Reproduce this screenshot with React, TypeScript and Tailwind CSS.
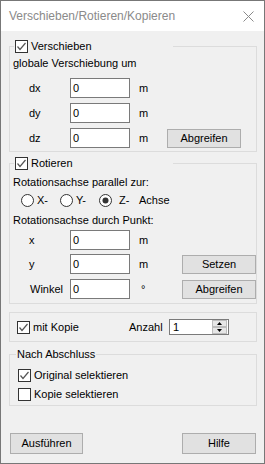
import { ReactNode } from 'react';

const font = { fontFamily: '"Liberation Sans", Arial, sans-serif' };

function CheckBox({ checked }: { checked: boolean }) {
  return (
    <svg width="13" height="13" viewBox="0 0 13 13" className="shrink-0">
      <rect x="0.5" y="0.5" width="12" height="12" fill="#fff" stroke="#333" />
      {checked && <path d="M2.5 6.5 L5 9.5 L10.5 3" fill="none" stroke="#555" strokeWidth="1.2" />}
    </svg>
  );
}

function Radio({ checked }: { checked: boolean }) {
  return (
    <svg width="13" height="13" viewBox="0 0 13 13" className="shrink-0">
      <circle cx="6.5" cy="6.5" r="6" fill="#fff" stroke="#333" />
      {checked && <circle cx="6.5" cy="6.5" r="3" fill="#333" />}
    </svg>
  );
}

function Button({ label, width, height = 'h-[19px]' }: { label: string; width: string; height?: string }) {
  return (
    <div
      className={`${width} ${height} shrink-0 flex items-center justify-center bg-[#e1e1e1] border border-[#adadad] text-black`}
    >
      {label}
    </div>
  );
}

function Field({ value = '0' }: { value?: string }) {
  return (
    <div className="w-[60px] h-[20px] shrink-0 flex items-center bg-white border border-[#7a7a7a] pl-[2px]">
      {value}
    </div>
  );
}

function InputRow({
  label,
  unit,
  unitWidth,
  children,
  className = '',
}: {
  label: string;
  unit: string;
  unitWidth: string;
  children?: ReactNode;
  className?: string;
}) {
  return (
    <div className={`flex items-center h-[20px] pl-[19px] ${className}`}>
      <span className="w-[41px] shrink-0">{label}</span>
      <Field />
      <span className={`ml-[9px] ${unitWidth} shrink-0`}>{unit}</span>
      {children}
    </div>
  );
}

function CheckLegend({ label }: { label: string }) {
  return (
    <legend className="ml-[4px] w-[159px] pl-[1px]">
      <span className="flex items-center h-[13px] gap-[3px]">
        <CheckBox checked />
        <span>{label}</span>
      </span>
    </legend>
  );
}

export default function App() {
  return (
    <div
      className="w-[265px] h-[464px] flex flex-col border border-[#777] bg-[#f0f0f0] text-[11px] leading-[13px] text-black"
      style={font}
    >
      {/* Title bar */}
      <div className="h-[30px] shrink-0 bg-white flex items-center justify-between pl-[8px] pr-[10px]">
        <span className="text-[12px] text-[#8a8a8a]">Verschieben/Rotieren/Kopieren</span>
        <svg width="11" height="11" viewBox="0 0 11 11">
          <path d="M0.5 0.5 L10.5 10.5 M10.5 0.5 L0.5 10.5" stroke="#8a8a8a" strokeWidth="1" />
        </svg>
      </div>

      <div className="flex-1 flex flex-col pl-[8px]">
        {/* Verschieben */}
        <fieldset className="mt-[9px] w-[248px] border border-[#dcdcdc] pb-[3px]">
          <CheckLegend label="Verschieben" />
          <div className="mt-[4px] pl-[3px]">globale Verschiebung um</div>
          <InputRow label="dx" unit="m" unitWidth="w-[28px]" className="mt-[8px]" />
          <InputRow label="dy" unit="m" unitWidth="w-[28px]" className="mt-[5px]" />
          <InputRow label="dz" unit="m" unitWidth="w-[28px]" className="mt-[5px]">
            <Button label="Abgreifen" width="w-[74px]" />
          </InputRow>
        </fieldset>

        {/* Rotieren */}
        <fieldset className="mt-[5px] w-[248px] border border-[#dcdcdc] pb-[4px]">
          <CheckLegend label="Rotieren" />
          <div className="mt-[6px] pl-[3px]">Rotationsachse parallel zur:</div>
          <div className="mt-[5px] h-[13px] flex items-center pl-[11px]">
            <span className="w-[39px] flex items-center gap-[3px]">
              <Radio checked={false} />
              <span>X-</span>
            </span>
            <span className="w-[39px] flex items-center gap-[3px]">
              <Radio checked={false} />
              <span>Y-</span>
            </span>
            <span className="w-[40px] flex items-center gap-[7px]">
              <Radio checked />
              <span>Z-</span>
            </span>
            <span>Achse</span>
          </div>
          <div className="mt-[7px] pl-[3px]">Rotationsachse durch Punkt:</div>
          <InputRow label="x" unit="m" unitWidth="w-[43px]" className="mt-[3px]" />
          <InputRow label="y" unit="m" unitWidth="w-[43px]" className="mt-[4px]">
            <Button label="Setzen" width="w-[74px]" />
          </InputRow>
          <div className="flex items-center h-[20px] pl-[20px] mt-[5px]">
            <span className="w-[40px] shrink-0">Winkel</span>
            <Field />
            <span className="ml-[11px] w-[41px] shrink-0">°</span>
            <Button label="Abgreifen" width="w-[74px]" />
          </div>
        </fieldset>

        {/* mit Kopie */}
        <div className="mt-[8px] w-[248px] h-[30px] border border-[#dcdcdc] flex items-center pl-[7px]">
          <CheckBox checked />
          <span className="ml-[3px] w-[96px]">mit Kopie</span>
          <span className="w-[40px]">Anzahl</span>
          <div className="w-[60px] h-[16px] flex items-center justify-between bg-white border border-[#7a7a7a] pl-[3px] pr-[1px]">
            <span>1</span>
            <div className="w-[15px] h-[14px] flex flex-col gap-[0px]">
              <div className="h-[7px] flex items-center justify-center bg-[#e6e6e6] border border-[#bcbcbc]">
                <svg width="5" height="3" viewBox="0 0 5 3">
                  <path d="M0 3 L2.5 0 L5 3 Z" fill="#000" />
                </svg>
              </div>
              <div className="h-[7px] flex items-center justify-center bg-[#e6e6e6] border border-[#bcbcbc]">
                <svg width="5" height="3" viewBox="0 0 5 3">
                  <path d="M0 0 L5 0 L2.5 3 Z" fill="#000" />
                </svg>
              </div>
            </div>
          </div>
        </div>

        {/* Nach Abschluss */}
        <fieldset className="mt-[6px] w-[248px] border border-[#dcdcdc] pb-[4px]">
          <legend className="ml-[6px] px-[1px] leading-[13px]">Nach Abschluss</legend>
          <div className="mt-[8px] pl-[8px] flex items-center h-[13px] gap-[3px]">
            <CheckBox checked />
            <span>Original selektieren</span>
          </div>
          <div className="mt-[6px] pl-[8px] flex items-center h-[13px] gap-[3px]">
            <CheckBox checked={false} />
            <span>Kopie selektieren</span>
          </div>
        </fieldset>

        <div className="flex-1" />

        {/* Bottom buttons */}
        <div className="w-[248px] flex justify-between pl-[1px] pr-[1px] mb-[9px]">
          <Button label="Ausführen" width="w-[73px]" height="h-[21px]" />
          <Button label="Hilfe" width="w-[74px]" height="h-[21px]" />
        </div>
      </div>
    </div>
  );
}
